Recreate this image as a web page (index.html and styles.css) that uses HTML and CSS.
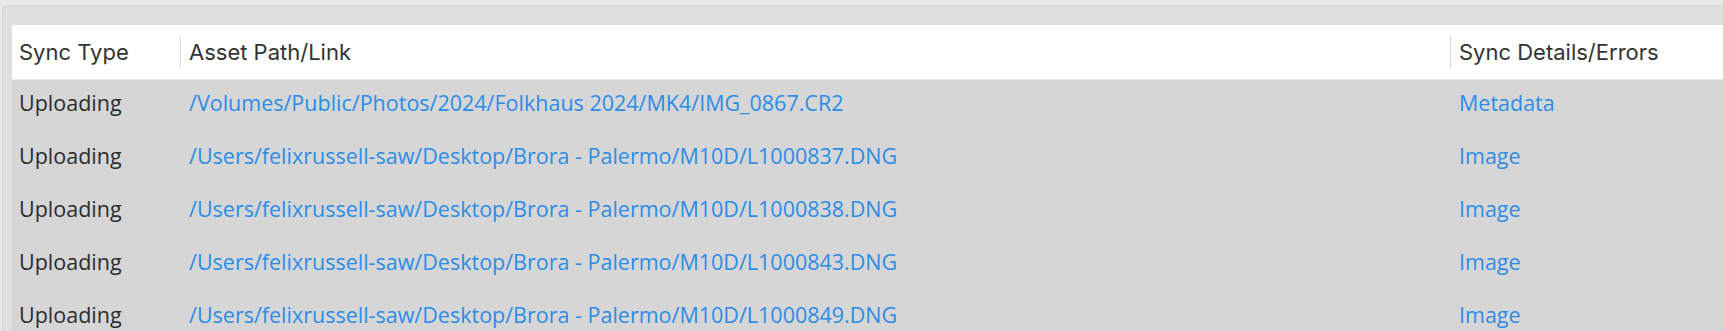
FILE: index.html
```html
<!DOCTYPE html>
<html>
<head>
<meta charset="utf-8">
<link rel="stylesheet" href="styles.css">
</head>
<body>
<div class="panel">
  <div class="table">
    <div class="row head">
      <div class="cell c1">Sync Type</div>
      <div class="cell c2"><span class="div"></span>Asset Path/Link</div>
      <div class="cell c3"><span class="div"></span>Sync Details/Errors</div>
    </div>
    <div class="row">
      <div class="cell c1">Uploading</div>
      <div class="cell c2 link">/Volumes/Public/Photos/2024/Folkhaus 2024/MK4/IMG_0867.CR2</div>
      <div class="cell c3 link">Metadata</div>
    </div>
    <div class="row">
      <div class="cell c1">Uploading</div>
      <div class="cell c2 link">/Users/felixrussell-saw/Desktop/Brora - Palermo/M10D/L1000837.DNG</div>
      <div class="cell c3 link">Image</div>
    </div>
    <div class="row">
      <div class="cell c1">Uploading</div>
      <div class="cell c2 link">/Users/felixrussell-saw/Desktop/Brora - Palermo/M10D/L1000838.DNG</div>
      <div class="cell c3 link">Image</div>
    </div>
    <div class="row">
      <div class="cell c1">Uploading</div>
      <div class="cell c2 link">/Users/felixrussell-saw/Desktop/Brora - Palermo/M10D/L1000843.DNG</div>
      <div class="cell c3 link">Image</div>
    </div>
    <div class="row">
      <div class="cell c1">Uploading</div>
      <div class="cell c2 link">/Users/felixrussell-saw/Desktop/Brora - Palermo/M10D/L1000849.DNG</div>
      <div class="cell c3 link">Image</div>
    </div>
  </div>
</div>
</body>
</html>
```

FILE: styles.css
```css
html, body {
  margin: 0;
  padding: 0;
  background: #e9e9e9;
}
body {
  font-family: "Open Sans", "Noto Sans", sans-serif;
  font-size: 21.5px;
  color: #2c2c2c;
}
.panel {
  margin-top: 5px;
  margin-left: 2px;
  background: #dfdfdf;
  border-top: 1px solid #d2d2d2;
  border-left: 1px solid #d2d2d2;
  border-top-left-radius: 6px;
  padding: 19px 0 0 9px;
}
.table {
  display: flex;
  flex-direction: column;
}
.row {
  display: grid;
  grid-template-columns: 168px 1270px 1fr;
  height: 53px;
  background: #d6d6d6;
  align-items: center;
  padding-bottom: 9px;
  box-sizing: border-box;
  flex: none;
}
.row.head {
  height: 55px;
  padding-bottom: 0;
  background: #ffffff;
  border-bottom: 1px solid #e9e9e9;
  color: #333333;
  font-family: Inter, "Liberation Sans", sans-serif;
  font-size: 22px;
}
.cell {
  display: flex;
  align-items: center;
  white-space: nowrap;
  padding-left: 7px;
}
.c2, .c3 {
  padding-left: 9px;
}
.head .c2, .head .c3 {
  padding-left: 0;
}
.div {
  width: 1px;
  height: 32px;
  background: #dadada;
  margin-right: 8px;
}
.link {
  color: #2b8de8;
}
```
